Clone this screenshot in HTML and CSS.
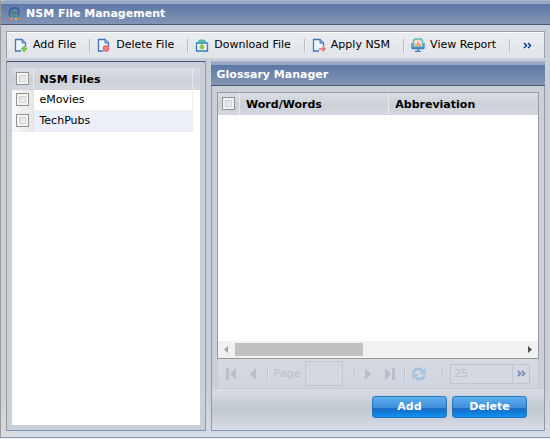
FILE: index.html
```html
<!DOCTYPE html>
<html lang="en">
<head>
<meta charset="utf-8">
<title>NSM File Management</title>
<link rel="stylesheet" href="styles.css">
</head>
<body>
<main class="window">
  <header class="titlebar window-title">
    <svg class="icon" viewBox="0 0 14 14" aria-hidden="true">
      <path d="M2.500 9V4l3-3H10l1.500 2v6" fill="none" stroke="#285b9b" stroke-width="1.400"/>
      <path d="M4 4.500h6V7H4z" fill="#4d7f75"/><path d="M2 9h10" stroke="#33969a" stroke-width="1.500"/>
      <path d="M0 11h2v2H0z" fill="#e45d67"/><path d="M4 11h2v2H4z" fill="#e59b55"/><path d="M8 11h2v2H8z" fill="#efb640"/><path d="M12 11h2v2h-2z" fill="#ee7657"/>
    </svg>
    <h1>NSM File Management</h1>
  </header>
  <div class="content">
    <nav class="toolbar" aria-label="File actions">
      <button type="button" class="tool">
        <svg class="icon" viewBox="0 0 14 14" aria-hidden="true"><path d="M7 13H1.500V1.500H8L11.500 5v4" fill="#eef5fd" stroke="#4077b8" stroke-width="1.300"/><path d="M8 1.500V5h3.500" fill="#92bce4" stroke="#4077b8"/><path d="M10 8v6M7 11h6" stroke="#82c74b" stroke-width="2.400"/></svg>
        Add File</button>
      <span class="sep"></span>
      <button type="button" class="tool">
        <svg class="icon" viewBox="0 0 14 14" aria-hidden="true"><path d="M6 13H1.500V1.500H8L11.500 5v3" fill="#eef5fd" stroke="#4077b8" stroke-width="1.300"/><path d="M8 1.500V5h3.500" fill="#92bce4" stroke="#4077b8"/><circle cx="9" cy="10.500" r="3.300" fill="#e9666d"/><path d="M7.500 9l3 3m0-3l-3 3" stroke="#f8a5a6"/></svg>
        Delete File</button>
      <span class="sep"></span>
      <button type="button" class="tool">
        <svg class="icon" viewBox="0 0 14 14" aria-hidden="true"><path d="M3 4V3l2-1.500h4L11 3v1" fill="#51bbb1"/><path d="M1.500 5h11v8h-11z" fill="#e8f1fb" stroke="#3978b9" stroke-width="1.300"/><path d="M1.500 7V4.500h11V7" fill="none" stroke="#46aab0"/><circle cx="7" cy="9" r="2.500" fill="#a8d45d"/><path d="M7 5v5M5.500 9L7 10.500 8.500 9" fill="none" stroke="#79b84b"/></svg>
        Download File</button>
      <span class="sep"></span>
      <button type="button" class="tool">
        <svg class="icon" viewBox="0 0 14 14" aria-hidden="true"><path d="M6 13H1.500V1.500H8L11.500 5v3M6 13h1" fill="#eef5fd" stroke="#4077b8" stroke-width="1.300"/><path d="M8 1.500V5h3.500" fill="#92bce4" stroke="#4077b8"/><path d="M7 11h6M10.500 8.500L13 11l-2.500 2.500" fill="none" stroke="#ef6670" stroke-width="1.300"/></svg>
        Apply NSM</button>
      <span class="sep"></span>
      <button type="button" class="tool">
        <svg class="icon" viewBox="0 0 14 14" aria-hidden="true"><path d="M2.500 2.500L4 1h6l1.500 1.500V9h-9z" fill="#f3dfcf" stroke="#5bbdba" stroke-width="1.500"/><path d="M1 5v5h12V5M1 10.500h12M4 13.500h6M7 11v2" fill="none" stroke="#3b7dbb" stroke-width="1.300"/><path d="M4 8V6h2V4h2v2h2v2z" fill="#f3a578"/></svg>
        View Report</button>
      <span class="sep"></span>
      <button type="button" class="more" aria-label="More actions"><svg viewBox="0 0 9 7" aria-hidden="true"><path d="M1 1l2.500 2.500L1 6M5 1l2.500 2.500L5 6" fill="none" stroke="#15428b" stroke-width="1.500"/></svg></button>
    </nav>
    <div class="columns">
      <section class="panel files">
        <table class="grid">
          <colgroup><col class="tick-col"><col><col class="end-col"></colgroup>
          <thead><tr><th class="tick"><input type="checkbox" aria-label="Select all files"></th><th>NSM Files</th><th class="end"></th></tr></thead>
          <tbody>
            <tr><td class="tick"><input type="checkbox" id="emovies"></td><td class="name"><label for="emovies">eMovies</label></td><td class="end"></td></tr>
            <tr class="alt"><td class="tick"><input type="checkbox" id="techpubs"></td><td class="name"><label for="techpubs">TechPubs</label></td><td class="end"></td></tr>
          </tbody>
        </table>
      </section>
      <section class="panel glossary">
        <header class="titlebar glossary-title"><h2>Glossary Manager</h2></header>
        <div class="glossary-body">
          <div class="list">
            <table class="grid words">
              <colgroup><col class="tick-col"><col><col></colgroup>
              <thead><tr><th class="tick"><input type="checkbox" aria-label="Select all words"></th><th>Word/Words</th><th>Abbreviation</th></tr></thead>
            </table>
            <div class="scroll" aria-hidden="true">
              <svg viewBox="0 0 4 7"><path d="M4 0v7L0 3.500z" fill="#a3a3a3"/></svg>
              <span class="track"><span class="thumb"></span></span>
              <svg viewBox="0 0 4 7"><path d="M0 0v7l4-3.500z" fill="#505050"/></svg>
            </div>
          </div>
          <div class="paging">
            <button type="button" class="page-btn first" disabled aria-label="First page"><svg viewBox="0 0 12 12"><path d="M1 0h3v12H1zM11 0v12L5 6z"/></svg></button>
            <button type="button" class="page-btn" disabled aria-label="Previous page"><svg viewBox="0 0 12 12"><path d="M9 0v12L3 6z"/></svg></button>
            <span class="sep"></span>
            <label for="page">Page</label>
            <input class="page-no" id="page" type="text" disabled>
            <span class="sep"></span>
            <button type="button" class="page-btn" disabled aria-label="Next page"><svg viewBox="0 0 12 12"><path d="M3 0v12l6-6z"/></svg></button>
            <button type="button" class="page-btn last" disabled aria-label="Last page"><svg viewBox="0 0 12 12"><path d="M1 0v12l6-6zM8 0h3v12H8z"/></svg></button>
            <span class="sep"></span>
            <button type="button" class="reload" disabled aria-label="Refresh"><svg viewBox="0 0 14 14"><path d="M1.500 6C2 1.500 8 .5 10.500 4M12.500 8c-.5 4.500-6.500 5.500-9 2" fill="none" stroke="#a3c2df" stroke-width="2.500"/><path d="M13.500 1v6h-6zM.5 13V7h6z" fill="#a3c2df"/></svg></button>
            <span class="sep"></span>
            <div class="size"><input type="text" value="25" disabled aria-label="Rows per page"><button type="button" disabled aria-label="Choose rows per page"><svg viewBox="0 0 9 7"><path d="M1 1l2.500 2.500L1 6M5 1l2.500 2.500L5 6" fill="none" stroke="#7890b5" stroke-width="1.800"/></svg></button></div>
          </div>
        </div>
        <footer class="actions"><button type="button" class="primary">Add</button><button type="button" class="primary">Delete</button></footer>
      </section>
    </div>
  </div>
</main>
</body>
</html>
```
FILE: styles.css
```css
* { box-sizing: border-box; }

body {
  margin: 0;
  font: 11px/14px "DejaVu Sans", Verdana, sans-serif;
  color: #000;
  background: #eceff5;
}

button, input { font: inherit; color: inherit; margin: 0; }
button { border: 0; padding: 0; background: none; }
svg { display: block; flex: none; }
h1, h2 { margin: 0; font-size: 11px; line-height: 14px; }

.window {
  display: flex;
  flex-direction: column;
  min-height: calc(100vh - 1px);
  border-left: 1px solid #999;
  border-bottom: 1px solid #8095b8;
  background: #cad0da;
}

.titlebar {
  display: flex;
  align-items: center;
  gap: 5px;
  height: 25px;
  padding: 2px 6px 0;
  color: #fff;
  border-top: 1px solid #a4b2ca;
  border-bottom: 1px solid #4b5875;
  background: linear-gradient(#96a8c5 0, #96a8c5 3px, #5d78a5 3px, #8395b5);
}

.window-title { border-top-left-radius: 3px; }
.icon { width: 14px; height: 14px; }

.content {
  display: flex;
  flex-direction: column;
  flex: 1;
  gap: 3px;
  padding: 6px 5px;
  background: linear-gradient(#cad0da 90%, #d8dce5);
}

.toolbar {
  display: flex;
  align-items: center;
  height: 27px;
  padding: 0 12px 0 7px;
  border: 1px solid #a0a0a0;
  border-bottom: 0;
  background: linear-gradient(#fff 0, #fff 1px, #eaecf0 1px, #e0e5e9);
}

.tool { display: flex; align-items: center; gap: 5px; white-space: nowrap; }
.sep { flex: none; width: 2px; height: 13px; border-left: 1px solid #bcbcbc; border-right: 1px solid #f2f2f2; }
.toolbar .sep { margin: 0 6px 0 13px; }
.more { margin-left: auto; }
.more svg { width: 9px; height: 7px; }

.columns { display: grid; grid-template-columns: 37fr 62fr; gap: 5px; flex: 1; }
.panel { border: 1px solid #999; border-bottom-color: #8095b8; min-width: 0; }
.files { padding: 6px 5px 5px; border-top-color: #4b5875; background: linear-gradient(#fff, #fff) content-box, #cad0da; }

.grid { width: 100%; border-collapse: collapse; table-layout: fixed; background: #fff; }
.tick-col { width: 21px; }
.end-col { width: 7px; }
th {
  height: 21px;
  padding: 3px 6px 0;
  text-align: left;
  border-right: 1px solid #e8eaed;
  border-bottom: 1px solid #d0d4da;
  background: linear-gradient(#d9dee4, #cbd1d7 55%, #d3d7df);
}
th:last-child { border-right: 0; }
td { height: 21px; padding: 0 6px; border-bottom: 1px solid #ededed; }
td.name { border-right: 1px solid #ededed; }
td.end, th.end { padding: 0; }
td.end { border-bottom: 0; }
.tick { padding: 0; text-align: center; }
td.tick { border-right: 1px solid #e0e0e0; background: linear-gradient(90deg, #fafafa, #e6e6e6); }
.alt .name { background: #eaeff8; }

input[type="checkbox"] {
  appearance: none;
  display: block;
  width: 13px;
  height: 13px;
  margin: 0 auto;
  border: 1px solid #929292;
  background: linear-gradient(135deg, #d0d4da, #fff);
  box-shadow: inset 0 0 0 2px #f4f4f4, inset 0 0 0 3px #cfd2d6;
}

.glossary { display: flex; flex-direction: column; border-top: 0; }
.glossary-title { margin: 0 -1px; border-top-left-radius: 3px; border-top-right-radius: 3px; }
.glossary-body { display: flex; flex-direction: column; flex: 1; padding: 6px 5px 0; background: #cad0da; }
.list { display: flex; flex-direction: column; flex: 1; border: 1px solid #999; background: #fff; }
.words .tick-col { width: 22px; }

.scroll { display: flex; align-items: center; gap: 7px; height: 17px; margin-top: auto; padding: 0 6px; background: #f1f1f1; }
.scroll svg { width: 4px; height: 7px; }
.track { flex: 1; }
.thumb { display: block; width: 45%; height: 13px; background: #c1c1c1; }

.paging {
  display: flex;
  align-items: center;
  gap: 8px;
  height: 30px;
  padding: 0 8px 0 7px;
  color: #b9bfca;
  border: 1px solid #c2c8d5;
  border-top: 0;
  background: linear-gradient(#d5d9e2, #d0d5df);
}
.page-btn { width: 12px; height: 12px; fill: #b9bfca; }
.page-btn svg { width: 12px; height: 12px; }
.first { margin-right: 2px; }
.last { margin-left: 2px; }
.paging label { margin: 0 -3px; }
.page-no { width: 38px; height: 25px; border: 1px solid #c2c8d3; background: #d2d7e0; }
.paging > .sep { border-left-color: #bfc5d0; border-right-color: #dde1e8; }
.page-no + .sep { margin: 0 -2px 0 3px; }
.reload { width: 14px; height: 14px; margin-left: -2px; }
.reload svg { width: 14px; height: 14px; }
.reload + .sep { margin-left: auto; margin-right: -2px; }
.size { display: flex; width: 80px; height: 20px; border: 1px solid #bfc5d0; background: #d4d9e1; }
.size input { flex: 1; min-width: 0; padding: 0 3px; border: 0; background: none; }
.size button { display: grid; place-items: center; width: 17px; border-left: 1px solid #c2c8d3; }
.size svg { width: 9px; height: 7px; }

.actions {
  display: flex;
  align-items: center;
  justify-content: flex-end;
  gap: 5px;
  height: 41px;
  padding: 0 17px 5px;
  background: linear-gradient(#d7dce5, #c1c8d1 50%, #d7dce5);
}
.primary {
  width: 75px;
  height: 22px;
  border: 1px solid #2c75b3;
  border-radius: 3px;
  color: #fff;
  font-weight: bold;
  background: linear-gradient(#5ab0ee, #3f8ddb 56%, #1769c3 58%, #0c92f5);
}
```
